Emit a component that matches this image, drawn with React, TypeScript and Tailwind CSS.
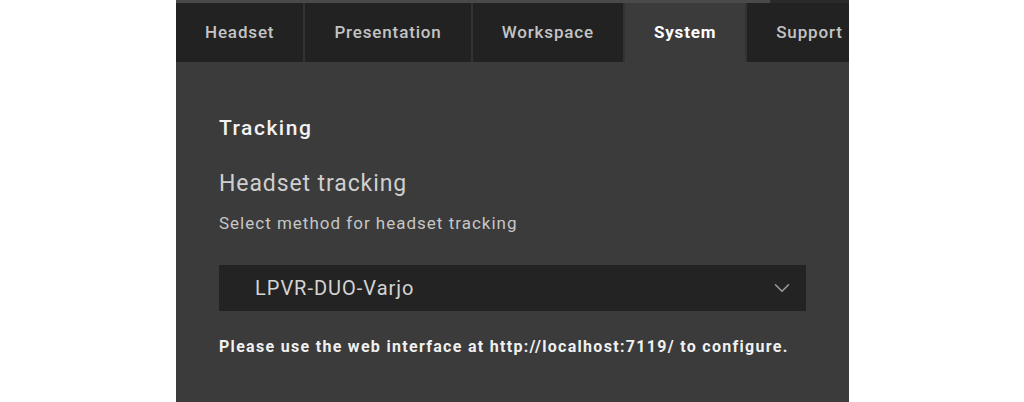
import { ChevronDown } from "lucide-react";

const TABS = ["Headset", "Presentation", "Workspace", "System", "Support"];

export default function App() {
  const active = "System";

  return (
    <div className="w-[1024px] h-[402px] bg-white overflow-hidden" style={{ fontFamily: "Roboto, 'Noto Sans', sans-serif" }}>
      <div className="ml-[176px] w-[673px] h-full bg-[#3b3b3b] flex flex-col">
        {/* top scroll strip */}
        <div className="flex h-[3px] shrink-0">
          <div className="w-[594px] bg-[#4a4a4a]" />
          <div className="flex-1 bg-[#2a2a2a]" />
        </div>

        <nav className="flex h-[59px] shrink-0 overflow-hidden bg-[#333333] gap-[2px]">
          {TABS.map((tab) => (
            <div
              key={tab}
              className={
                tab === active
                  ? "shrink-0 flex items-center px-[29px] bg-[#3b3b3b] text-white text-[17px] tracking-[0.8px] font-bold"
                  : "shrink-0 flex items-center px-[29px] bg-[#222222] text-[#c4c4c4] text-[17px] tracking-[0.85px] font-medium"
              }
            >
              {tab}
            </div>
          ))}
        </nav>

        <div className="px-[43px] pt-[52px]">
          <h2 className="text-[21px] leading-[28px] font-medium tracking-[1.5px] text-[#f2f2f2]">Tracking</h2>
          <h3 className="mt-[27px] text-[23px] leading-[30px] tracking-[0.9px] text-[#cfcfcf]">Headset tracking</h3>
          <p className="mt-[14px] text-[17px] leading-[20px] tracking-[1px] text-[#c6c6c6]">Select method for headset tracking</p>

          <div className="mt-[32px] h-[46px] bg-[#232323] flex items-center justify-between pl-[36px] pr-[11px]">
            <span className="text-[20px] tracking-[1px] text-[#d4d4d4]">LPVR-DUO-Varjo</span>
            <ChevronDown className="w-[26px] h-[26px] text-[#9a9a9a]" strokeWidth={1.5} />
          </div>

          <p className="mt-[26px] text-[16px] leading-[20px] font-bold tracking-[1.3px] text-[#f0f0f0]">
            Please use the web interface at http://localhost:7119/ to configure.
          </p>
        </div>
      </div>
    </div>
  );
}
